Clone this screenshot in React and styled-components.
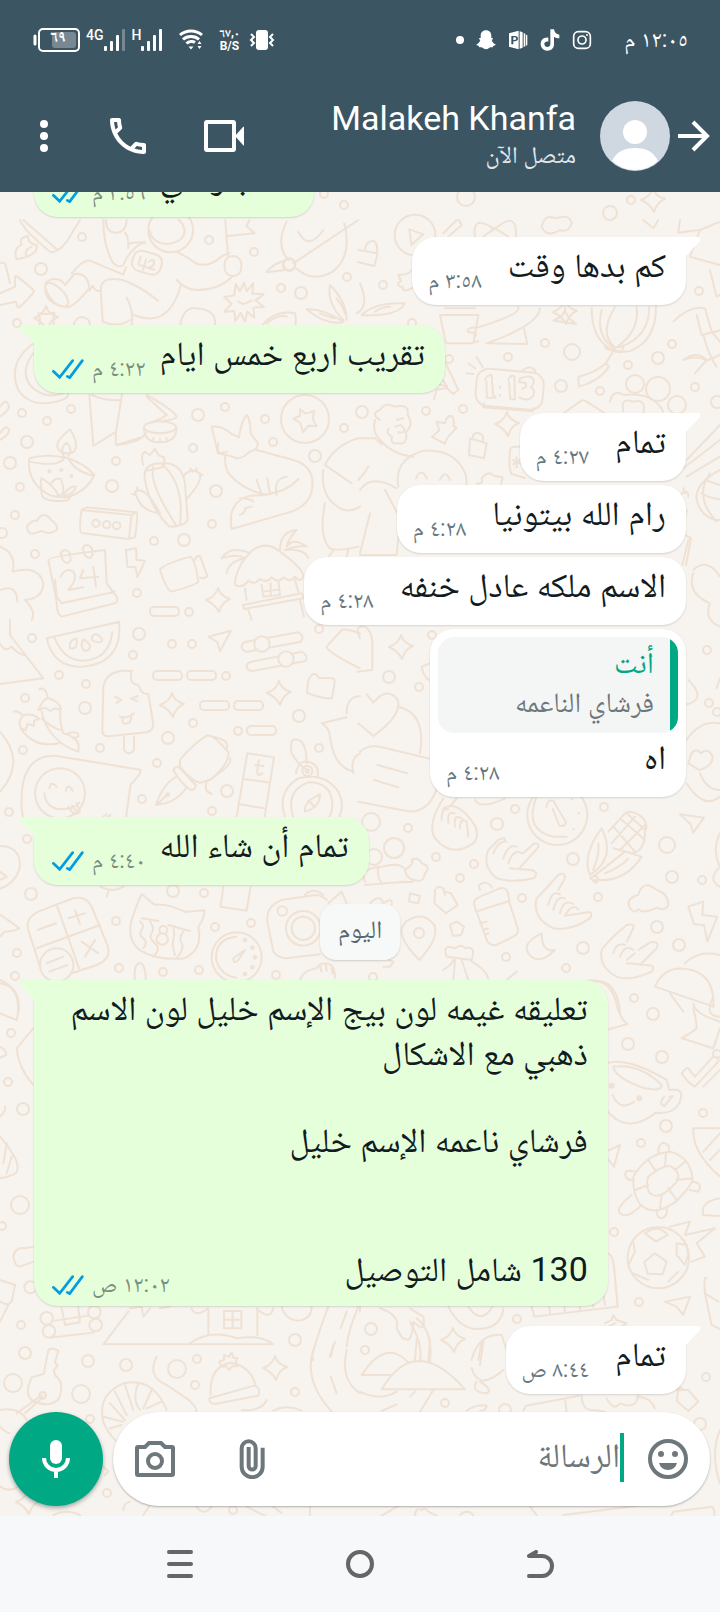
import React from "react";
import styled, { createGlobalStyle } from "styled-components";

const GlobalStyle = createGlobalStyle`
  * {
    box-sizing: border-box;
  }
  body {
    margin: 0;
    font-family: Roboto, 'Noto Naskh Arabic', 'Noto Sans Arabic', 'DejaVu Sans', sans-serif;
    color: #111b21;
  }
  button {
    border: 0;
    padding: 0;
    background: none;
    color: inherit;
    font: inherit;
    cursor: pointer;
  }
  svg {
    display: block;
  }
`;

const Phone = styled.div`
  display: flex;
  flex-direction: column;
  width: 100%;
  height: 100vh;
`;

/* ---------- header ---------- */

const Header = styled.header`
  flex: none;
  background: #3b5563;
  color: #fff;
`;

const StatusBar = styled.div`
  display: flex;
  align-items: center;
  justify-content: space-between;
  height: 80px;
  padding: 0 32px;
`;

const StatusGroup = styled.div`
  display: flex;
  align-items: center;
  gap: ${(props) => props.gap};
`;

const Battery = styled.div`
  position: relative;
  display: flex;
`;

const BatteryLevel = styled.span`
  position: absolute;
  top: 0;
  left: 18px;
  width: 16px;
  font-size: 16px;
  font-weight: bold;
  line-height: 18px;
  text-align: center;
`;

const Signal = styled.div`
  display: flex;
  align-items: flex-end;
`;

const SignalLabel = styled.span`
  align-self: flex-start;
  font-size: 14px;
  font-weight: 500;
  line-height: 12px;
`;

const Speed = styled.div`
  width: 28px;
  font-size: 12px;
  font-weight: bold;
  line-height: 13px;
  text-align: center;
`;

const Clock = styled.time`
  margin-left: 20px;
  font-size: 23px;
  line-height: 32px;
`;

const AppBar = styled.div`
  display: flex;
  align-items: center;
  height: 112px;
  padding: 0 10px 0 32px;
`;

const IconButton = styled.button`
  flex: none;
  display: flex;
  align-items: center;
  justify-content: center;
  width: ${(props) => props.width || '48px'};
  height: 48px;
`;

const Actions = styled.div`
  display: flex;
  gap: 48px;
  margin-right: auto;
`;

const Contact = styled.div`
  display: flex;
  flex-direction: column;
  align-items: flex-end;
  margin: 0 24px 0 16px;
`;

const ContactName = styled.h1`
  margin: 0;
  font-size: 34px;
  font-weight: normal;
  line-height: 38px;
  white-space: nowrap;
`;

const ContactState = styled.span`
  font-size: 24px;
  line-height: 36px;
  color: #dfe5e8;
`;

const Avatar = styled.svg`
  flex: none;
  margin-right: 8px;
`;

/* ---------- conversation ---------- */

const Chat = styled.main`
  position: relative;
  flex: 1;
  display: flex;
  flex-direction: column;
  min-height: 0;
  overflow: hidden;
  background: #f7f3ee;
`;

const WallpaperSvg = styled.svg`
  position: absolute;
  inset: 0;
  width: 100%;
  height: 100%;
`;

const Messages = styled.section`
  position: relative;
  flex: 1;
  display: flex;
  flex-direction: column;
  justify-content: flex-end;
  min-height: 0;
  padding: 0 34px;
`;

const Bubble = styled.article`
  position: relative;
  flex: none;
  align-self: ${(props) => (props.$sent ? 'flex-end' : 'flex-start')};
  max-width: 88%;
  margin-top: ${(props) => (props.$grouped ? '4px' : '20px')};
  border-radius: 24px;
  border-top-left-radius: ${(props) => (props.$tail && props.$sent ? '0' : '24px')};
  border-top-right-radius: ${(props) => (props.$tail && !props.$sent ? '0' : '24px')};
  background: ${(props) => (props.$sent ? '#e6ffdb' : '#fff')};
  box-shadow: 0 1px 2px rgba(11, 20, 26, 0.14);

  &::before {
    content: '';
    display: ${(props) => (props.$tail ? 'block' : 'none')};
    position: absolute;
    top: 0;
    ${(props) => (props.$sent ? 'left' : 'right')}: -14px;
    width: 15px;
    height: 20px;
    background: inherit;
    clip-path: ${(props) => (props.$sent
      ? 'polygon(2px 0, 100% 0, 100% 100%, 0 4px, 0 1px)'
      : 'polygon(0 0, 13px 0, 100% 1px, 100% 4px, 0 100%)')};
  }
`;

const Body = styled.div`
  padding-top: ${(props) => (props.$quoted ? '2px' : '6px')};
  padding-right: 20px;
  padding-bottom: ${(props) => (props.$long ? '9px' : '12px')};
  padding-left: ${(props) => (props.$sent ? '18px' : '16px')};
`;

const Line = styled.p`
  margin: 0;
  min-height: 42px;
  font-size: 34px;
  line-height: 45px;
`;

const LastLine = styled.div`
  display: flex;
  justify-content: space-between;
  gap: ${(props) => (props.$sent ? '14px' : '26px')};
  min-height: 50px;
`;

const Meta = styled.div`
  display: flex;
  align-items: center;
  align-self: flex-end;
  gap: 8px;
  font-size: 23px;
  line-height: 24px;
  white-space: nowrap;
  color: ${(props) => (props.$sent ? '#7b8f7c' : '#667781')};
`;

const Quote = styled.blockquote`
  min-width: 240px;
  margin: 8px 8px 0;
  padding: 6px 24px 10px 16px;
  border-radius: 16px;
  background: linear-gradient(to left, #00a884 8px, #f4f6f6 8px);
`;

const QuoteName = styled.div`
  font-size: 30px;
  line-height: 40px;
  color: #00a884;
`;

const QuoteText = styled.div`
  font-size: 28px;
  line-height: 40px;
  color: #6e777c;
`;

const DayChip = styled.time`
  flex: none;
  align-self: center;
  min-width: 80px;
  margin-top: 19px;
  padding: 10px 16px 14px;
  border-radius: 16px;
  background: #f7f8f8;
  box-shadow: 0 1px 2px rgba(11, 20, 26, 0.16);
  font-size: 25px;
  line-height: 32px;
  text-align: center;
  color: #54656f;
`;

/* ---------- composer ---------- */

const Composer = styled.form`
  position: relative;
  flex: none;
  display: flex;
  gap: 10px;
  padding: 18px 10px 10px 9px;
`;

const MicButton = styled.button`
  flex: none;
  display: flex;
  align-items: center;
  justify-content: center;
  width: 94px;
  height: 94px;
  border-radius: 50%;
  background: #00a884;
  color: #fff;
  box-shadow: 0 2px 4px rgba(11, 20, 26, 0.35);
`;

const InputPill = styled.div`
  flex: 1;
  display: flex;
  align-items: center;
  min-width: 0;
  height: 94px;
  padding: 0 18px;
  border-radius: 47px;
  background: #fff;
  color: #6e777c;
  box-shadow: 0 1px 2px rgba(11, 20, 26, 0.3);
`;

const AttachButton = styled(IconButton)`
  margin-left: 49px;
`;

const MessageInput = styled.input`
  flex: 1;
  min-width: 0;
  height: 64px;
  border: 0;
  padding: 0 0 8px;
  outline: 0;
  background: none;
  font: inherit;
  font-size: 34px;
  color: #111b21;

  &::placeholder {
    color: #6e777c;
    opacity: 1;
  }
`;

const Caret = styled.span`
  flex: none;
  width: 4px;
  height: 49px;
  margin: 0 20px 4px 0;
  background: #00a884;
`;

/* ---------- system navigation ---------- */

const NavBar = styled.nav`
  flex: none;
  display: flex;
  align-items: center;
  height: 96px;
  padding: 0 90px;
  background: #f6f8fa;
  color: #666;
`;

const NavButton = styled.button`
  flex: 1;
  display: flex;
  justify-content: center;
`;

const Ticks = () => (
  <svg width="32" height="20" viewBox="0 0 96 60" fill="none" stroke="#009de2" strokeWidth="8" strokeLinecap="round">
    <path d="M4 37L23 55L62 5" />
    <path d="M46 52L53 56L91 5" />
  </svg>
);

const Bars = ({ weak }) => (
  <svg width="22" height="22" viewBox="0 0 22 22" fill="currentColor">
    <rect x="0" y="17" width="3" height="5" rx="1" />
    <rect x="6" y="12" width="3" height="10" rx="1" />
    <rect x="12" y="6" width="3" height="16" rx="1" />
    <rect x="18" y="0" width="3" height="22" rx="1" opacity={weak ? 0.3 : 1} />
  </svg>
);

const Status = () => (
  <StatusBar>
    <StatusGroup gap="6px">
      <Battery>
        <svg width="48" height="24" viewBox="0 0 48 24" fill="none" stroke="currentColor">
          <path d="M3 8v8" strokeWidth="3" strokeLinecap="round" />
          <rect x="7" y="1" width="40" height="22" rx="4" strokeWidth="2" />
          <rect x="20" y="4" width="24" height="16" rx="3" fill="#fff" fillOpacity="0.3" stroke="none" />
        </svg>
        <BatteryLevel>٦٩</BatteryLevel>
      </Battery>
      <Signal><SignalLabel>4G</SignalLabel><Bars weak /></Signal>
      <Signal><SignalLabel>H</SignalLabel><Bars /></Signal>
      <svg width="40" height="22" viewBox="-10 0 40 22" fill="none" stroke="currentColor" strokeWidth="3">
        <path d="M1 6C7 .5 17 .5 23 6" />
        <path d="M4 10.500C8 6.500 16 6.500 20 10.500" />
        <path d="M7.500 14.500C10 12 14 12 16 13.500" />
        <path d="M9.500 17.500h5L12 20.500z" fill="currentColor" stroke="none" />
        <path d="M18.500 15l2-3 2 3zM18.500 17l2 3 2-3z" fill="currentColor" stroke="none" />
      </svg>
      <Speed>٦٧,٠<br />B/S</Speed>
      <svg width="26" height="22" viewBox="0 0 26 22" fill="none" stroke="currentColor" strokeWidth="2">
        <rect x="7" y="1" width="12" height="20" rx="3" fill="currentColor" stroke="none" />
        <path d="M2 5l3 3-3 3 3 3-3 3M24 5l-3 3 3 3-3 3 3 3" />
      </svg>
    </StatusGroup>
    <StatusGroup gap="12px">
      <svg width="8" height="8" viewBox="0 0 8 8"><circle cx="4" cy="4" r="4" fill="currentColor" /></svg>
      <svg width="20" height="20" viewBox="0 0 60 60" fill="currentColor">
        <path d="M30 1c10 0 16 7 16 16v7l5 1c1 3-4 5-4 5 2 7 6 11 12 13 0 4-7 5-7 5l-2 4c-6-1-9 0-12 3-4 4-12 4-16 0-3-3-6-4-12-3l-2-4s-7-1-7-5c6-2 10-6 12-13 0 0-5-2-4-5l5-1v-7C14 8 20 1 30 1z" />
      </svg>
      <svg width="20" height="20" viewBox="0 0 60 60" fill="currentColor">
        <path fillRule="evenodd" d="M3 10L32 2v56L3 50zM10 18v25h6V34h5c12-1 12-16 0-16zM16 22h4c6 0 6 8 0 8h-4z" />
        <path d="M35 4l9 3v46l-9 3zM47 9l5 2v38l-5 2zM54 14l4 2v29l-4 2z" />
      </svg>
      <svg width="20" height="22" viewBox="0 0 60 66" fill="currentColor">
        <path d="M31 1h11c1 9 7 15 16 16v11c-6 0-12-2-16-5v23c0 12-9 19-20 19S2 56 2 45c0-12 10-21 23-19v12c-7-2-12 2-12 7 0 6 5 9 9 9 6 0 9-4 9-9z" />
      </svg>
      <svg width="20" height="20" viewBox="0 0 60 60" fill="none" stroke="currentColor" strokeWidth="5">
        <rect x="5" y="5" width="50" height="50" rx="14" />
        <circle cx="30" cy="30" r="12" />
        <circle cx="45" cy="15" r="3" fill="currentColor" stroke="none" />
      </svg>
      <Clock dir="rtl">١٢:٠٥ م</Clock>
    </StatusGroup>
  </StatusBar>
);

const doodles = {
  // [cx, cy, r]
  dots: [
    [82, 237, 4], [41, 269, 6], [209, 240, 4], [254, 252, 4], [289, 265, 6], [347, 277, 4], [281, 288, 4], [301, 293, 6],
    [17, 323, 4], [82, 325, 8], [22, 413, 4], [71, 409, 4], [47, 421, 4], [27, 442, 6], [198, 415, 6], [225, 407, 4],
    [265, 419, 4], [273, 442, 4], [344, 428, 4], [315, 456, 6], [193, 448, 4], [10, 463, 6], [116, 461, 4], [112, 486, 6],
    [20, 487, 4], [216, 491, 6], [15, 515, 4], [212, 524, 4], [154, 541, 4], [184, 540, 6], [35, 554, 4], [137, 593, 4],
    [189, 612, 4], [2, 533, 5], [466, 197, 9], [631, 200, 4], [610, 213, 7], [324, 194, 4], [344, 205, 4],
    [32, 638, 4], [139, 634, 6], [172, 644, 4], [192, 644, 4], [133, 655, 4], [319, 629, 4], [226, 676, 4], [59, 675, 4],
    [86, 684, 4], [25, 698, 4], [85, 708, 6], [193, 723, 4], [299, 716, 6], [168, 738, 6], [238, 731, 4], [319, 748, 4],
    [100, 748, 4], [23, 750, 4], [157, 763, 4], [142, 799, 4], [227, 791, 6], [212, 811, 4], [9, 812, 4], [27, 839, 4],
    [31, 894, 6], [173, 891, 6], [204, 893, 4], [116, 921, 4], [215, 927, 4], [251, 923, 4], [17, 953, 4], [119, 968, 4],
    [163, 972, 4], [199, 970, 4], [276, 975, 4], [15, 976, 4], [383, 285, 4], [412, 323, 4], [545, 343, 4], [572, 352, 8],
    [508, 357, 4], [449, 359, 4], [672, 344, 4], [658, 358, 6], [628, 365, 4], [561, 386, 6], [600, 391, 4], [635, 384, 9],
    [658, 389, 12], [677, 405, 9], [695, 387, 4], [426, 411, 4], [463, 409, 4], [362, 412, 6], [699, 291, 4], [717, 402, 6],
    [432, 635, 4], [389, 677, 6], [419, 687, 4], [707, 650, 4], [709, 703, 4], [371, 822, 9], [408, 828, 4], [394, 848, 10],
    [374, 857, 8], [497, 824, 6], [515, 809, 4], [604, 807, 4], [667, 845, 8], [573, 859, 6], [436, 857, 4], [474, 864, 4],
    [460, 878, 4], [522, 898, 4], [598, 897, 4], [672, 877, 6], [702, 880, 4], [657, 927, 6], [679, 945, 6], [583, 948, 6],
    [506, 957, 4], [566, 968, 4], [373, 977, 4], [419, 933, 5], [634, 998, 4], [653, 1014, 6], [628, 1044, 6], [662, 1057, 6],
    [703, 1113, 4], [666, 1126, 6], [641, 1143, 4], [614, 1232, 4], [639, 1302, 4], [371, 1329, 6], [517, 1319, 4],
    [365, 1350, 4], [11, 1033, 4], [8, 1082, 4], [23, 1109, 6], [20, 1205, 9], [2, 1226, 4], [21, 1325, 4], [25, 1353, 6],
    [88, 1361, 6], [126, 1365, 6], [177, 1369, 9], [197, 1359, 4], [195, 1385, 4], [13, 1383, 9], [81, 1394, 9],
    [295, 1340, 6], [295, 1392, 4], [90, 1419, 4], [107, 1493, 4], [233, 1510, 4], [445, 1403, 4], [505, 1410, 6],
    [706, 1377, 4], [700, 1424, 6], [717, 712, 4], [717, 1054, 4],
  ],
  // four-pointed stars [x, y]
  sparkles: [[46, 318], [218, 600], [172, 705], [279, 693], [507, 424], [565, 312], [401, 647], [275, 1368], [453, 1340], [28, 1502], [653, 200]],
  pills: [[153, 671], [187, 671], [200, 701], [234, 701], [247, 726], [150, 607]],
};

const Wallpaper = () => (
  <WallpaperSvg
    viewBox="0 192 720 1324"
    preserveAspectRatio="xMidYMin slice"
    fill="none"
    stroke="#efe2d5"
    strokeWidth="2"
    strokeLinecap="round"
    strokeLinejoin="round"
    aria-hidden="true"
  >
    {doodles.dots.map(([x, y, r]) => <circle key={`${x}-${y}`} cx={x} cy={y} r={r} />)}
    {doodles.sparkles.map(([x, y]) => (
      <path key={`${x}-${y}`} transform={`translate(${x} ${y})`} d="M0-12Q2-4 12-1Q4 2 1 12Q-3 4-12 0Q-3-3 0-12z" />
    ))}
    {doodles.pills.map(([x, y]) => <rect key={`${x}-${y}`} x={x} y={y} width="29" height="9" rx="4" />)}

    {/* runner, star badge, lamp, cactus, fox, calendar, hut */}
    <g transform="translate(0 220) scale(.3333)" strokeWidth="6">
      <path d="M60 0q10 30 90 95q20 8 50-30l40-65M70 0l100 88M50 118q-12-30 15-45q-10-20 20-25q-5 20 25 28q5 30-60 42M80 110q-10-20 15-30" />
      <path d="M310 0q0 80 30 130q15 15 30 5q20-50 65-70M318 0q0 38 30 38t32-38M375 38q12 15 10 45M385 72q20-8 50-3M215 160q35-42 55-38l100 42l8-22" />
      <circle cx="512" cy="30" r="67" /><path d="M448 30q10 42 55 42q55-8 50-45q-5-20-18-27M535 98q30 15 55 33q30 10 60-10q20-18 38-22M530 180q25 30 65 30q60 0 100-38" />
      <rect x="397" y="97" width="88" height="62" rx="25" transform="rotate(16 441 128)" />
      <path d="M422 110l-7 24l24 6M438 118l-9 32M447 126q10-14 16 0q-2 14-20 18l20 5" />
      <rect x="674" y="108" width="50" height="60" rx="24" /><path d="M676 0l8 106M684 48l80-8l-25-22l10-18" />
      <path d="M150 180q30-10 45 15l28-33q40-5 45 42q-40 52-65 58q-80-10-65-75zM135 200q10-30 55 15q25 35 8 45q-45 0-63-60zM268 212l10-15q8 20 25 15M302 210q0-35 40-33q50 0 132 65M302 210l6 95q45 20 82-5M380 233q22 40 15 82M395 282q110 50 148-88" />
      <path d="M733 240m-26-48l13 22l12-26l8 26l20-25l-3 32l34 2l-25 18l26 20l-32 2l3 30l-21-18l-7 30l-13-26l-16 24l-3-30l-30 2l22-24l-22-20l30-5zM715 245l15 8l25-12" />
      <path d="M115 280q20 5 48-2q-6 20 0 40M115 280q8 18 3 38M540 318q10-60 50-53q60 5 55 50M785 318q40-50 100-38q5 20 0 38M800 310q40-30 60-20" />
      <path d="M860 5q-35 70 5 115M888 145q50 45 110 10q60-45 35-145M1075 0L880 130M895 35q30 60 75-5M855 122q-40 10-55 35l60-8" /><circle cx="868" cy="133" r="18" />
      <path d="M1030 300q-50-50-40-105q50 50 50 105M1030 305q-60-40-110-37q50 45 105 40M1010 235q20 25 25 45M960 280q20 10 45 15" />
      <path d="M0 220l45-20v-30q0-10 55 40q10 5-40 50q-8 10-12-15l-48 10M0 130q15-8 18 10l12 50" />
      <path d="M100 370q-80 60-45 140q40 60 130 30q20-5 20-20M100 400q-40 50-10 95q40 45 100 25" />
      <path d="M0 560q20-30 27 0q0 10-27 30M0 640q20-30 27-10q0 15-27 30" />
      <circle cx="915" cy="597" r="72" /><path d="M900 568l17 13l26-8l-5 24l12 22l-25-2l-16 20l-8-28l-21-13l20-8z" />
      <path d="M268 525l12 153l68-43l18-112M275 525q45 20 90 15M348 635l-1 35l3 5l80-25M348 675q70-5 90-35M440 525q80 45 90 65q-5 10-38 12M440 530l60 55q-20 15-45 22" />
      <ellipse cx="480" cy="622" rx="48" ry="18" /><path d="M432 622q0 45 45 45q55 0 52-45M460 655v10M480 657v10M500 655v10" />
      <path d="M210 628q-50 40-35 60q20 20 45 8q20-20-10-68zM190 710q-10-30 10-42q20 20 5 40M88 715q-10 70 60 110q30 10 60 5q55-20 75-65q-30-35-80-50q-60-15-115 0M90 725q90 20 105-15M205 715q20 40 75 52M125 820q0 20 35 22q50 5 50-12M125 820q-5-40 0-45q35 20 50 50M150 795q15-25 32-18q20 50-10 50M190 825q20-30 38-25q-5 20-35 28" />
      <circle cx="148" cy="754" r="3" /><circle cx="184" cy="750" r="3" /><circle cx="214" cy="769" r="3" />
      <path d="M430 735q-10-30 5-40l15 10l15-18l12 20l15 5q5 20-5 30l-45 10M435 780q-10-50 50-50q60-5 70 60l8 110q-10 20-55 20q-60-60-73-140zM460 740q-15 50 70 178M485 732q70 60 55 180M550 770q20-30 50-10q10 20-42 80M405 815q30-20 75 65q-60-5-75-65M570 745l8 10M590 745l-2 10M608 765l-10 2M397 822l10 3M410 802l3 10" />
      <path d="M635 620q30-5 60 22l22 10q10-60 25-67q10 20 10 55l22 30q0 20-25 25q-30 30-50 15l-45-10q-10-40-19-80zM655 670q-5 25 5 30l22-5M675 710q0 40 15 55q40 45 110 60M770 690l110 30q70 20 55 95q-10 40-60 60l-180 52q-15-80 55-100q100 0 145-50M830 825q-10-50 30-55M770 780l14 40M802 775l8 48M720 835q30 0 40 10M720 885q20-10 15-20l20-5" />
      <path d="M1075 655q-70 20-100 80l80 55M970 750q-10 80 50 115q30 15 60-5M975 850q-20 100 15 135q20 10 85-5M1000 990l-20 30M1045 990l-5 22" />
      <path d="M245 870l15-8l150 15q5 5-5 75l-20 5l-140-18q-10-5 0-69zM245 870l150 15l15-8M395 885l-8 70" />
      <circle cx="288" cy="910" r="11" /><circle cx="320" cy="914" r="11" /><circle cx="350" cy="917" r="11" />
      <path d="M90 940q-20-20 5-35q10-5 15-2q20-35 45-2q20 15 15 30q-20 15-45 2q-30 10-35 7z" />
      <path d="M145 1020q0-10 170-30l5 100l30 40q5 15-5 20l-160 40q-15-5-15-45zM165 1080l5 50l15 20l160-35M182 1000q10-20 28 0l2 20q-10 18-24 0zM248 985q10-20 28 0l2 20q-10 18-24 0z" />
      <path d="M182 1070q15-30 38-15q15 20-15 55l45-8M250 1050l-10 25l55-5M280 1040l8 60M378 990l30-5l2 35l25 2l-23 50l-5-30l-25-2z" />
      <path d="M480 1050q5-15 90-40q15 5 25 75q-5 10-80 30q-15-3-35-65zM585 1020q0-12 15-12l22 60q-10 10-22 5" />
      <path d="M705 1085q10-60 60-100q40-20 75 10q70 50 70 75q-10 20-25 0q-15 20-35 2q-15 20-35 0q-15 20-35 5q-15 20-35 5q-15 22-35 15q-5 0-5-12zM735 1105l5 35M885 1080l10 35M785 1095l5 35l50-5l-5-45M812 1090v38M788 1115l48-6M730 1155l175-35l5 15l-178 32zM745 1170l10 30M900 1140l12 50" />
      <path d="M750 1000q-60-25-85 15q45-15 70 0q-50 10-55 45M840 990q0-55 50-60q-25 25-30 50q20-30 60 0q-30-5-65 10q60-5 70 25" />
      <path d="M0 980q50 20 38 75q80-20 92 35q0 45-55 50q35 35 20 60M0 1110q50-20 52 35" />
    </g>

    {/* play, clock, lantern, bamboo, face, globe */}
    <g transform="translate(360 220) scale(.3333)" strokeWidth="6">
      <circle cx="165" cy="45" r="61" /><path d="M148 28l42 15l-36 32zM250 40l40-40M265 50l40-35l-8-15" />
      <path d="M345 50q-10-70 58-22q70-60 65 22M370 50l35-25l40 25M545 20q10-40 40-25q45-15 50 15q-10 30-35 20q-40 25-55-10M850 0l30 25l15-25M960 0l-5 38l60-8M1020 30l60-25M1020 30l-30 80l90 25M1050 150l20 80l10-5" />
      <path d="M-5 90l58 10l-10 38l-50-12M15 90q0-25 25-28q15 10 10 35M155 150q-10 15-40 15l8 18q-20 15 5 18q0 20 30 3M0 190q30 70-10 90M5 285q40-40 130-35q-20 40-130 35M45 275q20-15 45-15" />
      <path d="M240 285h115l-15 85H258zM255 265h90M540 265q-5 50-160 105l122 2l-10-45M475 262q10 20-120 60q-40 0-30 15q30 0 20 12q-10 20 10 15" />
      <path d="M615 260q5 25-35 42q40 5 68 10q-35-25-33-50" />
      <path d="M695 265q0 90 55 120q30 15 60 8q80-30 78-135M735 375q-5 15 50 22l5-15M765 262q-50 80 0 120M830 262q10 70-60 120M868 262q0 90-90 120M725 270q-20 80 40 115M740 425l-6 8M655 470q50-10 82-40l10 10q-30 45-90 60zM757 398l-15 25" />
      <path d="M940 305q50-50 95-40l20 70l25 30M1010 285l15 60l60-15M1030 345q20 70 40 95M1040 420q-30-30-70 0q35-15 70 0l-35 40M1045 420l35-15" />
      <rect x="348" y="452" width="202" height="112" rx="36" transform="rotate(5 450 508)" /><path d="M372 550l-2 12l148 12l4-10M488 452q20-20 38 0M325 430l20 15M350 412l18 28M320 460l20 2" />
      <path d="M375 480q5-15 20-15l4 58l8 10h-26l-2-48M420 500v3M420 525v3M445 480q5-15 18-12l2 70h-14l-4-52M480 475q40-15 42 12q-3 10-10 15q15 5 8 25q-15 20-42 5M480 475l-2 12l20 2v12l-12 5" />
      <path d="M250 415l45 95l-15 12l-20-18l-30 5l-8 28M240 470l22 30l-28-8" />
      <path d="M610 580l50-35q10-8 20 0l55 35M750 545q10-40 40-20q90-10 120 50M790 575q-10-45 30-30q40-10 30 35" />
      <path d="M60 600q-30-20 0-30q15-25 45-10q45-10 38 25q20 30-5 50q5 40-20 35q-30 5-22-20q-20-10-10-25M45 600q-10 35 15 60M110 600l20-5M105 620l18-5q25 25-8 22M60 660q40 45 100 50M-5 655h50l20 18" />
      <path d="M230 605l25 5q5-25 20-22q10 10 5 30l10 5l-28 30l-8 18l-38-20l22-20zM330 655l50 15l-8 45l-45-10zM338 655q0-20 20-15q15 5 10 25M450 690q0-10 20-10h10M450 690q-5 60 5 72l40 12M470 712v30M460 720l22 12M482 718l-22 15" />
      <path d="M115 800q-15-80 75-108q100-5 128 75l2 30M168 775q15-35 33 0M240 780q15-35 30 0M350 790q20 5 15-15q20-25 35-8l28 5l-5 20M0 810q35-50 110-5M-5 780q20-20 30-40M30 880l-30 120M75 810l45 85l-10 110H0" />
      <path d="M980 720l100-105M970 745l110-85M980 770l100-60" /><path d="M1080 750q-90 50-65 105q20 45 65 45M1050 760q-50 70 20 145M1025 820q25 15 55 18M1035 780l45 15" />
      <path d="M975 820l-5-15M955 830q30-30 30 0M980 870l-15 70M965 950l10-5l18 10l-15 80M985 960l-18 75M1000 1050q40-40 80 20M1000 1060q-20 60 50 90q-20 50 30 70" />
    </g>

    {/* watermelon, ice cream, chilli, pen, compass, calculator, cat */}
    <g transform="translate(0 620) scale(.3333)" strokeWidth="6">
      <path d="M140 55q20 90 110 85q100-10 108-100V5zM162 50q30 75 90 72q75-5 85-85M210 85q-5-25 20-30q5 35-20 30zM250 90q-10-15 0-32q35 20 10 35zM275 60q0-20 15-17q20 10 15 22q-15 5-30-5M30 0v45l100 130L0 192M0 70q15 30 35 10q20 25 42 25" />
      <path d="M625 50l68-18l-33 62l-8-28z" />
      <path d="M725 80q0-12 15-15l155-28q20 10 8 28l-160 30q-15 0-18-15zM740 140q0-12 15-15l150-30q20 10 12 28l-160 30q-15 0-17-13z" /><circle cx="786" cy="72" r="23" fill="#f7f3ee" /><circle cx="858" cy="117" r="23" fill="#f7f3ee" />
      <path d="M980 80l45-50q10-5 55 10M980 80q0 15 100 65M925 180q10-20 20-18q10 5 12 12l35 0q15 0 12 15l-8 45q-20 5-75-15z" />
      <path d="M310 200q10-55 85-47q-10 40 20 42q10 30 30 27l15 90q0 20-20 25l-115 12q-20 0-18-20zM345 230l20 10l-15 8M413 228l-20 8l20 8M360 290q20 8 42-10M368 290q-5 30 20 18q8-10 5-22M372 350v40q15 20 30 0v-40" />
      <path d="M118 208q20-10 25 28M115 270q15-35 30-35q35 10 38 35l-18-5l-15 8l-15-10zM125 275q20 90 110 120q10-40-45-55q-10-25-10-70M40 275q10-5 28 10M62 325q-10-25 10-40q30-5 45 12l-15 5l0 15l-20-5l-5 18l-15-5q40 60 115 45M180 330q-30-10-55-35M205 340q30-10 30 10l-15 5" />
      <path d="M65 570q-10-165 100-163l255 42q10 5-28 45l-14 100M65 570l5 25" /><circle cx="180" cy="520" r="75" /><path d="M148 505q5-25 22-5M198 512q5-25 20 0M133 520q5 45 50 48q40 0 55-20M205 560q20 35 35 15l-10-25M215 555l15 20M0 335q80 90 0 180M310 590l10-8M322 592l10-8" />
      <path d="M540 420q30-40 80-73q20-5 65 50q5 30-50 80l-35 12q-30-10-60-50zM520 450q5-10 15-10l52 55q0 15-15 15q-30-20-52-60M530 470q-40 20-62 85q60-5 90-50M470 555l30-30M640 350q50 10 40 35M690 415q10 20-70 70q-10 30 15 37" /><circle cx="503" cy="524" r="4" />
      <path d="M742 400l80 12l-28 180M742 400l-32 190M732 477l72 10M720 553l73 12M765 435l25 3M777 420q-10 45 0 45l10-5" />
      <path d="M875 400q-10-60 30-35q15 20 15 65M875 400q20 35 40 45M888 460q10-50 50-30q20 10 15 40" /><circle cx="922" cy="453" r="15" /><circle cx="922" cy="453" r="5" />
      <path d="M855 590q-25-75 40-115q80-20 120 40q20 40 3 75M880 592q-25-80 45-105q70 0 72 65q0 25-10 40M915 575q-5-30 45-52q0 40-45 52zM925 542l20 18M965 310l75-18M965 310q25 15 25 40q10 90 70 105M1040 280q0-50 40-52M1060 460q-10-45 20-60" />
      <path d="M0 678q60 0 60 60q-10 50-60 68M0 755l20 15l-20 10M0 885q10 5 58 40q-20 10-45 10L0 950" />
      <path d="M85 930q-10-35 30-55l90-35q50-20 70 20l45 110q20 45-30 65l-75 25M85 930l35 110M172 860l65 185M110 985l190-70M113 930l55-20M205 895l50-15M225 870l15 42M245 965l50 35M285 960l-30 50" /><circle cx="170" cy="1035" r="50" /><path d="M140 1030l50-20M148 1055l55-20" />
      <path d="M425 822l38 32q40-5 92 22l58-5q0 25-18 50q15 70-45 95q-80 5-130-25q-50-40-15-120q10-30 20-49zM425 895l50 8M420 905q15 10 5 25t5 25t0 30M450 905q15 20 5 35t10 30t-5 40M505 915l65 18M520 925q5 20 0 35t5 45M550 935q-15 20-5 35t-15 45" /><circle cx="490" cy="930" r="12" /><circle cx="487" cy="957" r="17" />
      <circle cx="710" cy="1012" r="75" /><path d="M708 950q-60 5-60 65q10 50 60 58M700 1015l35-25l-20 30q-15 15-15-5M670 800l-8 60l78 12l12-72M300 800q40 20 70 0M325 815l-5 15" /><circle cx="735" cy="960" r="4" /><circle cx="757" cy="983" r="4" /><circle cx="765" cy="1012" r="4" /><circle cx="757" cy="1042" r="4" /><circle cx="735" cy="1062" r="4" />
      <path d="M805 920q-15-60 40-80l100-15q20 0 35 15M805 920l15 75q20 25 50 18l90-10M915 825q25-25 55 0M985 850l40-35l15 35" /><circle cx="910" cy="925" r="52" /><circle cx="910" cy="925" r="35" /><circle cx="847" cy="873" r="14" />
      <path d="M405 1080q-5-50 15-50q15 0 18 50M900 1080q10-30 50-35q10-20 40-12q15 10 15 40M960 1040l5 15M978 1035l2 18M995 1045l3 15M55 1180q10-80-55-90" />
    </g>

    {/* heart, hands, corn, bottle, mushroom, moon */}
    <g transform="translate(360 620) scale(.3333)" strokeWidth="6">
      <path d="M-5 310l45 38q90-65 72-110q-30-40-72 10l-20-25M115 260q85 20 65 140M0 395q20-20 60-15l155 38M-5 545l145 28q60 10 88-60v-20M52 435l90 25M42 480l72 22M0 55q-20-40 15-35q25 15 22 65v65l-45 5M185 140l25-10M185 140q5 30 22 40M985 180q60 60-10 75M1080 175l-10 30" />
      <path d="M1080 310q-60-10-100 50M980 490q50 80 100 40M985 430l8-25q10-25 30-5q20-20 35 10q0 30-40 40zM1020 460q20 50 60 50M345 540q15 30 90-5" />
      <circle cx="592" cy="585" r="90" /><path d="M530 530q-40 100 50 120h40M560 560q0-20 20-18l38 65q-5 15-20 10l-20-50M635 538h2M655 580h2M640 628h2" />
      <path d="M250 535q-50 80-25 120q50 60 115 15q30-35-20-85q-35-40-70-20M245 600q0-40 20-32M265 610q-5-40 20-30M285 620q-5-40 20-25M300 625q0-35 20-20l5 45M290 535l-20 25" />
      <path d="M385 690q-20 50 25 85q50 15 110 0q20-15-5-25l-65-5M385 690l30-30q20-10 20 0M400 700q15-40 40-35M430 715q15-45 40-35M445 730q15-45 40-30M490 700l30-28q20-5 15 10l-55 60" />
      <path d="M530 835q20-20 65-70q20-10 20 10l-20 35M530 835q-15 60 50 90q50 10 110-30q10-20-5-18l-70 10M565 855q10-45 35-32M580 870q10-45 35-35M600 880q10-45 40-28M615 888q20-40 40-20" />
      <path d="M725 990q20-30 75-75q25-5 20 10l-20 40M725 990q-10 50 45 80q40 15 105-15q15-20-15-20l-60-5M760 1000q10-35 35-25M780 1010q15-40 40-20M800 1020l25-20M835 990l40-25q25 0 15 20l-50 50" />
      <path d="M745 635l50-55q20-15 55 15q15 20 5 40q0 60-40 65l-55-15M760 620l65 75M780 595l75 65M800 580l55 50M755 670l70-80M780 690l75-75M725 625q-60 80-35 140q80-50 35-140zM700 770l95-75l50 15q-50 80-145 70M735 760q50-20 70-45M700 750q20-50 15-80M690 775l15-10l12 15l-10 8z" />
      <path d="M225 810q0 20-2 40l35 30l35-25l-20-35l-20-5M230 805q5-10 20 0l5 20M150 820l30 8l-5 22l-28-5zM270 915l20-10l22 15l-8 25l-25 3zM15 785q-20-40 50-45q60-15 70 10q30-20 20-30q20-10 30 10q30 10 10 30q-5 30-30 20q-20 0-30-25M55 740q-5 30 10 50l95-5M15 795l120-10M30 850q30-30 40 0q30-20 25 5" />
      <path d="M345 860q-10-20 15-30l60-25q20-5 25 18l3 20l-100 32zM360 810q-10-20 15-22q20 5 20 15M350 875l30 85q10 20 30 15l50-25q20-10 12-30l-25-75M360 910l20-5M370 930l15-5M375 945l10-5" />
      <path d="M178 1020q-80-80-40-115q50-35 85 10q15 40-45 105zM260 1010q-15-40 25-25q20-15 30 0q35-10 20 35l-40-5zM285 1020l-5 60M305 1020l20 60M250 1050q30-20 30-30M335 1025q40 20 50 50M440 1080l30-25M545 940q-60 30-40 60q30 40 80-10q-40 10-40-50zM85 1020l15 5l-10 15h-20" />
      <path d="M810 865q-15-30 25-40q15-50 55-15q35 10 35 45q-10 20-35 8q-40 20-55 5q-10 15-25-3zM985 860l45-15l-3 40l45 5l-30 75l-10-50l-30-2zM1080 640q-25 50 0 100q-40 40 0 60" />
      <path d="M885 1100q30-70 110-50q70 20 65 110zM975 1030q40-40 105-25M930 1120l40 55M1000 1150q0 30 80 55M700 1085q70-10 80 90" />
      <path d="M960 583l72 10l-32 45l-8-25z" />
    </g>

    {/* mug, turtle, football, house, lower left */}
    <g transform="translate(360 960) scale(.3333)" strokeWidth="6">
      <path d="M680 62q75-10 92 80q10 35 30 50l-62 18M1060 110q-30 60 20 60M1000 145q10 40 10 60q-10 10-45 30l95 30l20-60M965 340q15-20 20-15l20 25l55-60q20 0 15 15l-70 75q-20-10-40-40M1030 380l50-50" />
      <path d="M740 310q60-20 180 50l8 30q50-10 30 40q-20 35-70 28q-90 70-150-10M760 320q80-10 145 55q0 20-50 10q-90-30-95-65zM928 410l10-2l-25 30q-20-5 0-28M758 405q20 50 65 20" /><circle cx="755" cy="377" r="6" fill="#efe2d5" /><circle cx="838" cy="415" r="6" fill="#efe2d5" />
      <path d="M738 575l42-20l-18 65l-20-25M1000 505h80M1000 505q-5 70 80 145M1030 575l50-55M1050 600l30-30M1080 715q-60 10-50 50l50 3" />
      <path d="M820 650q40-70 110-75q60 15 68 80q0 20-50 70q-70 50-110 5q-20-30-18-80zM865 650q50-40 70-30q30 20 15 45q-50 60-80 35q-15-20-5-50M865 600l20 30M918 578l-3 40M975 605l-30 25M995 655l-45 5M950 720l-25-35M900 745l5-40M825 690l40-15M895 580q0-35 20-30q15 5 12 25M825 635q-35-10-28 15q10 15 25 8M1000 665q30 5 15 30l-25-5M815 705q-50 40-35 55q20 20 65-25M890 750q0 25 15 25q20-5 15-30" />
      <circle cx="895" cy="893" r="92" /><path d="M885 880l35 25l-12 38l-45-2l-10-35zM855 820q40-30 68 5l-35 20zM820 845l5 30l-20 40M950 850l30 5l5 30l-10 30l-25-30zM820 940l45 20M925 965l30-30M930 800l60-15l-15 40l90-20l-55 45l25 40l-40 15" />
      <path d="M738 880q20-5 25 50l10 110l-250 30l-8-30M570 1060l-3-25M615 1055l-3-20M660 1048l-3-25M700 1040l-3-25M735 1035l-5-35" />
      <path d="M915 1025l75-15l-20 55l-20-25zM1040 955q-10-10-5 45l40 25M1035 1000l20 95l30 15M735 1090l20-10l5-15l10 15l30 10l-15 10M745 1100l20-10" />
      <path d="M0 1040v15M60 1045q60 20 50 60q20 40 25 30q20 20 25-50q40 40 30-15l-40-25M150 1085q40 70 30 120M170 1075q50 40 40 130M265 1040q40 80 110 65q50-10 55-60M325 1040q40 60 75-5M335 1200q20-80 90-75l20 60M365 1145l-10 55" />
    </g>
    <g transform="translate(0 960) scale(.3333)" strokeWidth="6">
      <path d="M0 60q70 30 50 120L0 160M100 205l-50 60q5 60 50 110M0 260q20 10 18 25l-18 8M0 470q20-20 15-30M0 530q60 70 52 100q0 15-52 25M20 550l-10 60M35 590l-15 50" />
      <path d="M100 860l-25 5q-30-5-35 25q5 30 20 30l40-15M0 960l45 15l-10 50q-15 15-35 0M25 1035l-25 50" />
      <circle cx="91" cy="982" r="18" /><circle cx="140" cy="1075" r="19" /><circle cx="147" cy="1114" r="19" /><circle cx="287" cy="1095" r="19" /><circle cx="283" cy="1056" r="19" />
      <path d="M185 1045l10 50l45-8l-5-45M165 1082l100-15M150 1133l130-15M385 1055l-75 98h510q-40-30-110-18q-80-30-145 18M390 1045l35-5l5 30l20-25M480 1045l30-5M625 1050v75M772 1050v75M575 1045q10 30 50 0M770 1045q40 40 50 0M672 1053h52v52h-52zM698 1053v52M672 1079h52" />
      <path d="M845 1040q10 40 50 42q40-5 40-42M985 1040q-60 160-45 160M1075 1040q-30 70-35 120M1040 1055l-18 50M1005 1145l-15 45" />
    </g>

    {/* key, croissant, hat, umbrellas */}
    <g transform="translate(0 1340) scale(.3333)" strokeWidth="6">
      <path d="M145 30q10-8 30 2l-10 35l8 10l-12 15l5 15q30 20 10 70q-20 25-70 10q-40-20-10-75l35-10zM125 165l-75 55M130 170l-55 50" /><circle cx="128" cy="166" r="10" />
      <path d="M0 210q60-10 80 30M0 260q20 20 30 20M0 440q30 20 60-5M310 245q-20-80 60-115q90-20 130 80M310 245q10 30 40 60M345 155l35 70M375 135l25 75M415 130q-20 50 5 80M455 150l-25 55M485 185l-45 20M330 190l45 50M310 230l60 15M330 265l35-10" />
      <path d="M632 165q-5-85 60-97q60 10 75 68M628 175l135-38q20 5 12 30l-130 25q-20-2-17-17zM665 80l-8-15l15-5l0-15l15 5l8-12l5 15l12 2l-5 12l5 12l-15 0l-10 10l-8-10z" />
      <path d="M470 50q-30 60 30 85l60 40q30 25 30 40M725 210q60 5 75-30M820 212q40-20 85 0M940 30q-30 90 55 185M1040 30q-20 90 40 130M1000 15l-8 35M992 110l18 50M310 380l15 15l-10 10M370 510q0-20 20-25M430 525l20-30M590 500q20 30 45 0M740 500l60 30M820 500l25 20M160 525q40-20 80 0M930 500v25" />
    </g>
    <g transform="translate(360 1340) scale(.3333)" strokeWidth="6">
      <path d="M5 105q70-110 140-38M65 148q100-170 250 0zM5 105h90M165 60l5-60M205 65l5-65M0 155q60 30 110 0M220 150l-40 65M165 155l-15 15M65 213l45-20M335 85q20 70 95 5M350 125q-20 30 30 35q20-10-20-35M360 75l10-70M320 212q30-20 60-15q0 15-20 15M490 212l8-15l160-30M615 180l5 35M665 165q0 50 40 45l30 5M740 175q20 40 40 15q50 20 55-25M830 170q40 0 55 35M955 150l30 0l30 35l-30 28l-35-30zM950 150q10-15 20 0" />
      <path d="M1080 270q-30 70 0 160M60 530l60-35l-20-5M165 530q0-30 20-20q10-10 20 5l30 15M300 525q20-20 40 0M510 500l20 25M610 525l240-30M935 525l5-10l115-15q10 5 8 25" />
    </g>
  </WallpaperSvg>
);

const Message = ({ sent, tail, grouped, quote, time, lines }) => (
  <Bubble $sent={sent} $tail={tail} $grouped={grouped}>
    {quote && (
      <Quote>
        <QuoteName>{quote.name}</QuoteName>
        <QuoteText>{quote.text}</QuoteText>
      </Quote>
    )}
    <Body $sent={sent} $quoted={!!quote} $long={lines.length > 1}>
      {lines.slice(0, -1).map((line, i) => <Line key={i}>{line}</Line>)}
      <LastLine $sent={sent}>
        <Line>{lines[lines.length - 1]}</Line>
        <Meta $sent={sent}>
          <time>{time}</time>
          {sent && <Ticks />}
        </Meta>
      </LastLine>
    </Body>
  </Bubble>
);

const order = [
  'تعليقه غيمه لون بيج الإسم خليل لون الاسم ذهبي مع الاشكال',
  '',
  'فرشاي ناعمه الإسم خليل',
  '',
  '',
  '130 شامل التوصيل',
];

export default function App() {
  return (
    <Phone>
      <GlobalStyle />
      <Header>
        <Status />
        <AppBar>
          <Actions>
            <IconButton width="24px" aria-label="خيارات">
              <svg width="8" height="32" viewBox="0 0 8 32" fill="currentColor">
                <circle cx="4" cy="4" r="4" /><circle cx="4" cy="16" r="4" /><circle cx="4" cy="28" r="4" />
              </svg>
            </IconButton>
            <IconButton aria-label="مكالمة صوتية">
              <svg width="48" height="48" viewBox="0 0 24 24" fill="currentColor">
                <path d="M6.54 5c.06.89.21 1.76.45 2.59l-1.2 1.2c-.41-1.2-.67-2.47-.76-3.79h1.51m9.86 12.02c.85.24 1.72.39 2.6.45v1.49c-1.32-.09-2.59-.35-3.8-.75l1.2-1.19M7.5 3H4c-.55 0-1 .45-1 1 0 9.39 7.61 17 17 17 .55 0 1-.45 1-1v-3.49c0-.55-.45-1-1-1-1.24 0-2.45-.2-3.57-.57-.1-.04-.21-.05-.31-.05-.26 0-.51.1-.71.29l-2.2 2.2c-2.83-1.45-5.15-3.76-6.59-6.59l2.2-2.2c.28-.28.36-.67.25-1.02C8.7 6.45 8.5 5.25 8.5 4c0-.55-.45-1-1-1z" />
              </svg>
            </IconButton>
            <IconButton aria-label="مكالمة فيديو">
              <svg width="48" height="48" viewBox="0 0 48 48" fill="none" stroke="currentColor" strokeWidth="4">
                <rect x="6" y="10" width="28" height="28" rx="1" />
                <path d="M35 24l8-9q1-1 1 0v18q0 1-1 0z" fill="currentColor" stroke="none" />
              </svg>
            </IconButton>
          </Actions>
          <Contact>
            <ContactName>Malakeh Khanfa</ContactName>
            <ContactState dir="rtl">متصل الآن</ContactState>
          </Contact>
          <Avatar width="70" height="70" viewBox="0 0 70 70" role="img" aria-label="Malakeh Khanfa">
            <circle cx="35" cy="35" r="35" fill="#cfd8e0" />
            <circle cx="35" cy="31" r="12" fill="#fff" />
            <path d="M12 60Q18 47 35 47T58 60A34 34 0 0 1 12 60z" fill="#fff" />
          </Avatar>
          <IconButton width="32px" aria-label="رجوع">
            <svg width="32" height="32" viewBox="0 0 32 32" fill="none" stroke="currentColor" strokeWidth="4">
              <path d="M0 16h29M15 2l14 14-14 14" />
            </svg>
          </IconButton>
        </AppBar>
      </Header>

      <Chat>
        <Wallpaper />
        <Messages dir="rtl">
          <Message sent time="٣:٥٦ م" lines={['هلأ بتوصي']} />
          <Message tail time="٣:٥٨ م" lines={['كم بدها وقت']} />
          <Message sent tail time="٤:٢٢ م" lines={['تقريب اربع خمس ايام']} />
          <Message tail time="٤:٢٧ م" lines={['تمام']} />
          <Message grouped time="٤:٢٨ م" lines={['رام الله بيتونيا']} />
          <Message grouped time="٤:٢٨ م" lines={['الاسم ملكه عادل خنفه']} />
          <Message grouped time="٤:٢٨ م" quote={{ name: 'أنت', text: 'فرشاي الناعمه' }} lines={['اه']} />
          <Message sent tail time="٤:٤٠ م" lines={['تمام أن شاء الله']} />
          <DayChip>اليوم</DayChip>
          <Message sent tail time="١٢:٠٢ ص" lines={order} />
          <Message tail time="٨:٤٤ ص" lines={['تمام']} />
        </Messages>

        <Composer onSubmit={(e) => e.preventDefault()}>
          <MicButton type="button" aria-label="رسالة صوتية">
            <svg width="28" height="38" viewBox="0 0 28 38" fill="none" stroke="currentColor" strokeWidth="4">
              <rect x="8" y="0" width="12" height="24" rx="6" fill="currentColor" stroke="none" />
              <path d="M2 18a12 12 0 0 0 24 0M14 30v8" />
            </svg>
          </MicButton>
          <InputPill>
            <IconButton type="button" aria-label="الكاميرا">
              <svg width="48" height="48" viewBox="0 0 48 48" fill="none" stroke="currentColor" strokeWidth="4">
                <path d="M7 12h7l4-4h12l4 4h7q1 0 1 1v26q0 1-1 1H7q-1 0-1-1V13q0-1 1-1z" />
                <circle cx="24" cy="26" r="7" />
              </svg>
            </IconButton>
            <AttachButton type="button" aria-label="إرفاق">
              <svg width="26" height="40" viewBox="0 0 78 120" fill="none" stroke="currentColor" strokeWidth="12" strokeLinecap="square">
                <path d="M71 32v51a31 31 0 0 1-63 0V28a21 21 0 0 1 42 0v53a10 10 0 0 1-21 0V30" />
              </svg>
            </AttachButton>
            <MessageInput dir="rtl" placeholder="الرسالة" aria-label="الرسالة" />
            <Caret />
            <IconButton type="button" aria-label="رموز تعبيرية">
              <svg width="40" height="40" viewBox="0 0 40 40" fill="none" stroke="currentColor" strokeWidth="4">
                <circle cx="20" cy="20" r="18" />
                <circle cx="13" cy="15" r="3" fill="currentColor" stroke="none" />
                <circle cx="27" cy="15" r="3" fill="currentColor" stroke="none" />
                <path d="M11 24h18q-2 7-9 7t-9-7z" fill="currentColor" stroke="none" />
              </svg>
            </IconButton>
          </InputPill>
        </Composer>
      </Chat>

      <NavBar>
        <NavButton aria-label="التطبيقات الأخيرة">
          <svg width="28" height="28" viewBox="0 0 28 28" stroke="currentColor" strokeWidth="4" strokeLinecap="round">
            <path d="M3 2h22M3 14h22M3 26h22" />
          </svg>
        </NavButton>
        <NavButton aria-label="الرئيسية">
          <svg width="28" height="28" viewBox="0 0 28 28" fill="none" stroke="currentColor" strokeWidth="4">
            <circle cx="14" cy="14" r="12" />
          </svg>
        </NavButton>
        <NavButton aria-label="رجوع">
          <svg width="28" height="28" viewBox="0 0 28 28" fill="none" stroke="currentColor" strokeWidth="4" strokeLinecap="round" strokeLinejoin="round">
            <path d="M10 2L3 6h13a10 10 0 0 1 0 20H3" />
          </svg>
        </NavButton>
      </NavBar>
    </Phone>
  );
}
